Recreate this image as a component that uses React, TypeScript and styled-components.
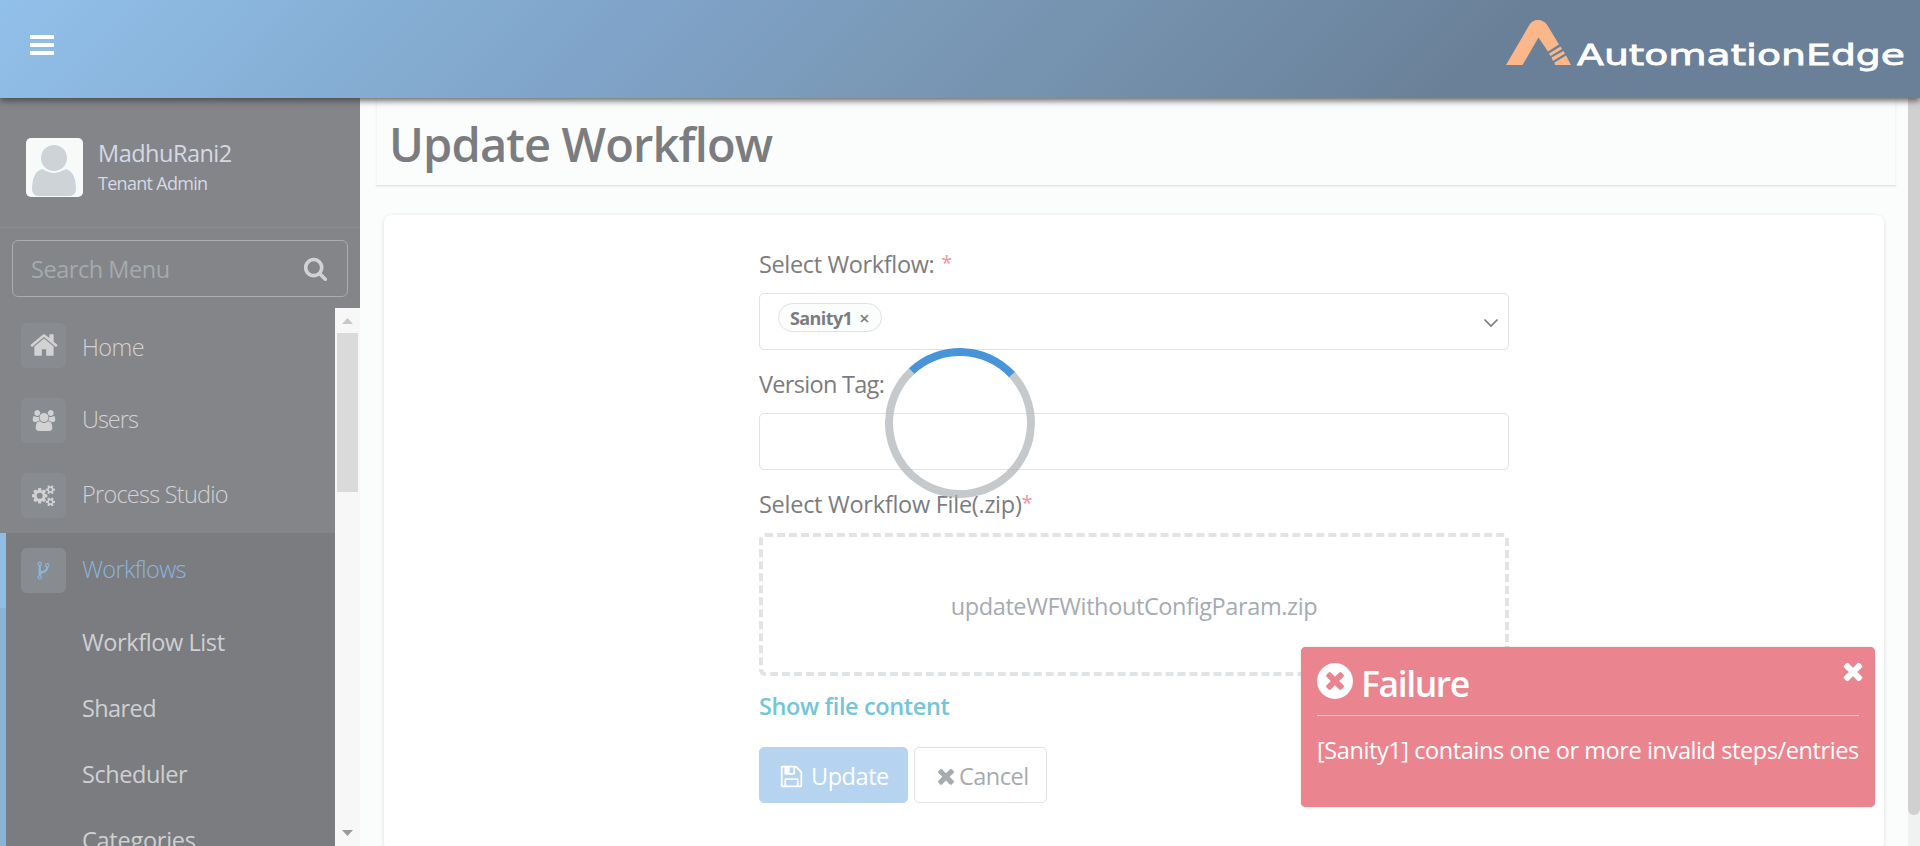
import React from 'react';
import styled, { createGlobalStyle } from 'styled-components';

const Global = createGlobalStyle`
  * { box-sizing: border-box; }
  html, body { margin: 0; height: 846px; overflow: hidden; background: #fbfdfc; }
  body { font-family: "Open Sans", "Noto Sans", sans-serif; font-size: 24px; color: #7b7c80; }
`;

const icons = {
  bars: { w: 1792, d: 'M1664 1344v128q0 26-19 45t-45 19h-1408q-26 0-45-19t-19-45v-128q0-26 19-45t45-19h1408q26 0 45 19t19 45zm0-512v128q0 26-19 45t-45 19h-1408q-26 0-45-19t-19-45v-128q0-26 19-45t45-19h1408q26 0 45 19t19 45zm0-512v128q0 26-19 45t-45 19h-1408q-26 0-45-19t-19-45v-128q0-26 19-45t45-19h1408q26 0 45 19t19 45z' },
  home: { w: 1792, d: 'M1472 992v480q0 26-19 45t-45 19h-384v-384h-256v384h-384q-26 0-45-19t-19-45v-480q0-1 .5-3t.5-3l575-474 575 474q1 2 1 6zm223-69l-62 74q-8 9-21 11h-3q-13 0-21-7l-692-577-692 577q-12 8-24 7-13-2-21-11l-62-74q-8-10-7-23.5t11-21.5l719-599q32-26 76-26t76 26l244 204v-195q0-14 9-23t23-9h192q14 0 23 9t9 23v408l219 182q10 8 11 21.5t-7 23.5z' },
  search: { w: 1792, d: 'M1216 832q0-185-131.5-316.5t-316.5-131.5-316.5 131.5-131.5 316.5 131.5 316.5 316.5 131.5 316.5-131.5 131.5-316.5zm512 832q0 52-38 90t-90 38q-54 0-90-38l-343-342q-179 124-399 124-143 0-273.5-55.5t-225-150-150-225-55.5-273.5 55.5-273.5 150-225 225-150 273.5-55.5 273.5 55.5 225 150 150 225 55.5 273.5q0 220-124 399l343 343q37 37 37 90z' },
  times: { w: 1792, d: 'M1490 1322q0 40-28 68l-136 136q-28 28-68 28t-68-28l-294-294-294 294q-28 28-68 28t-68-28l-136-136q-28-28-28-68t28-68l294-294-294-294q-28-28-28-68t28-68l136-136q28-28 68-28t68 28l294 294 294-294q28-28 68-28t68 28l136 136q28 28 28 68t-28 68l-294 294 294 294q28 28 28 68z' },
  timesCircle: { w: 1792, d: 'M1277 1122q0-26-19-45l-181-181 181-181q19-19 19-45 0-27-19-46l-90-90q-19-18-46-18-26 0-45 18l-181 181-181-181q-19-18-45-18-27 0-46 18l-90 90q-19 19-19 46 0 26 19 45l181 181-181 181q-19 19-19 45 0 27 19 46l90 90q19 18 46 18 26 0 45-18l181-181 181 181q19 18 45 18 27 0 46-18l90-90q19-19 19-46zm387-226q0 209-103 385.5t-279.5 279.5-385.5 103-385.5-103-279.5-279.5-103-385.5 103-385.5 279.5-279.5 385.5-103 385.5 103 279.5 279.5 103 385.5z' },
  save: { w: 1792, d: 'M512 1536h768v-384h-768v384zm896 0h128v-896q0-14-10-38.5t-20-34.5l-281-281q-10-10-34-20t-39-10v416q0 40-28 68t-68 28h-576q-40 0-68-28t-28-68v-416h-128v1280h128v-416q0-40 28-68t68-28h832q40 0 68 28t28 68v416zm-384-928v-320q0-13-9.5-22.5t-22.5-9.5h-192q-13 0-22.5 9.5t-9.5 22.5v320q0 13 9.5 22.5t22.5 9.5h192q13 0 22.5-9.5t9.5-22.5zm640 32v928q0 40-28 68t-68 28h-1344q-40 0-68-28t-28-68v-1344q0-40 28-68t68-28h928q40 0 88 20t76 48l280 280q28 28 48 76t20 88z' },
  fork: { w: 1792, d: 'M672 1472q0-40-28-68t-68-28-68 28-28 68 28 68 68 28 68-28 28-68zm0-1152q0-40-28-68t-68-28-68 28-28 68 28 68 68 28 68-28 28-68zm640 128q0-40-28-68t-68-28-68 28-28 68 28 68 68 28 68-28 28-68zm96 0q0 52-26 96.5t-70 69.5q-2 287-226 414-67 38-203 81-128 40-169.5 71t-41.5 100v26q44 25 70 69.5t26 96.5q0 80-56 136t-136 56-136-56-56-136q0-52 26-96.5t70-69.5v-820q-44-25-70-69.5t-26-96.5q0-80 56-136t136-56 136 56 56 136q0 52-26 96.5t-70 69.5v497q54-26 154-57 55-17 87.5-29.5t70.5-31 59-39.5 40.5-51 28-69.5 8.5-91.5q-44-25-70-69.5t-26-96.5q0-80 56-136t136-56 136 56 56 136z' },
  users: { w: 2048, d: 'M657 896q-162 5-265 128h-134q-82 0-138-40.5t-56-118.5q0-353 124-353 6 0 43.5 21t97.5 42.5 119 21.5q67 0 133-23-5 37-5 66 0 139 81 256zm1071 637q0 120-73 189.5t-194 69.5h-874q-121 0-194-69.5t-73-189.5q0-53 3.5-103.5t14-109 26.5-108.5 43-97.5 62-81 85.5-53.5 111.5-20q10 0 43 21.5t73 48 107 48 135 21.5 135-21.5 107-48 73-48 43-21.5q61 0 111.5 20t85.5 53.5 62 81 43 97.5 26.5 108.5 14 109 3.5 103.5zm-1024-1277q0 106-75 181t-181 75-181-75-75-181 75-181 181-75 181 75 75 181zm704 384q0 159-112.5 271.5t-271.5 112.5-271.5-112.5-112.5-271.5 112.5-271.5 271.5-112.5 271.5 112.5 112.5 271.5zm576 225q0 78-56 118.5t-138 40.5h-134q-103-123-265-128 81-117 81-256 0-29-5-66 66 23 133 23 59 0 119-21.5t97.5-42.5 43.5-21q124 0 124 353zm-128-609q0 106-75 181t-181 75-181-75-75-181 75-181 181-75 181 75 75 181z' },
  cogs: { w: 1920, d: 'M896 896q0-106-75-181t-181-75-181 75-75 181 75 181 181 75 181-75 75-181zm768 512q0-52-38-90t-90-38-90 38-38 90q0 53 37.5 90.5t90.5 37.5 90.5-37.5 37.5-90.5zm0-1024q0-52-38-90t-90-38-90 38-38 90q0 53 37.5 90.5t90.5 37.5 90.5-37.5 37.5-90.5zm-384 421v185q0 10-7 19.5t-16 10.5l-155 24q-11 35-32 76 34 48 90 115 7 11 7 20 0 12-7 19-23 30-82.5 89.5t-78.5 59.5q-11 0-21-7l-115-90q-37 19-77 31-11 108-23 155-7 24-30 24h-186q-11 0-20-7.5t-10-17.5l-23-153q-34-10-75-31l-118 89q-7 7-20 7-11 0-21-8-144-133-144-160 0-9 7-19 10-14 41-53t47-61q-23-44-35-82l-152-24q-10-1-17-9.5t-7-19.5v-185q0-10 7-19.5t16-10.5l155-24q11-35 32-76-34-48-90-115-7-11-7-20 0-12 7-20 22-30 82-89t79-59q11 0 21 7l115 90q34-18 77-32 11-108 23-154 7-24 30-24h186q11 0 20 7.5t10 17.5l23 153q34 10 75 31l118-89q8-7 20-7 11 0 21 8 144 133 144 160 0 8-7 19-12 16-42 54t-45 60q23 48 34 82l152 23q10 2 17 10.5t7 19.5zm640 533v140q0 16-149 31-12 27-30 52 51 113 51 138 0 4-4 7-122 71-124 71-8 0-46-47t-52-68q-20 2-30 2t-30-2q-14 21-52 68t-46 47q-2 0-124-71-4-3-4-7 0-25 51-138-18-25-30-52-149-15-149-31v-140q0-16 149-31 13-29 30-52-51-113-51-138 0-4 4-7 4-2 35-20t59-34 30-16q8 0 46 46.5t52 67.5q20-2 30-2t30 2q51-71 92-112l6-2q4 0 124 70 4 3 4 7 0 25-51 138 17 23 30 52 149 15 149 31zm0-1024v140q0 16-149 31-12 27-30 52 51 113 51 138 0 4-4 7-122 71-124 71-8 0-46-47t-52-68q-20 2-30 2t-30-2q-14 21-52 68t-46 47q-2 0-124-71-4-3-4-7 0-25 51-138-18-25-30-52-149-15-149-31v-140q0-16 149-31 13-29 30-52-51-113-51-138 0-4 4-7 4-2 35-20t59-34 30-16q8 0 46 46.5t52 67.5q20-2 30-2t30 2q51-71 92-112l6-2q4 0 124 70 4 3 4 7 0 25-51 138 17 23 30 52 149 15 149 31z' },
};

type IconName = keyof typeof icons;

const Svg = styled.svg`
  display: block;
  flex: none;
  fill: currentColor;
`;

/* Icon glyphs share a 1792-unit em; size is the em height in pixels. */
const Icon = ({ name, size }: { name: IconName; size: number }) => (
  <Svg width={(size * icons[name].w) / 1792} height={size} viewBox={`0 0 ${icons[name].w} 1792`}>
    <path d={icons[name].d} />
  </Svg>
);

interface TextProps {
  $size?: number;
  $weight?: number;
  $track?: number;
  $line?: number;
  $color?: string;
}
const Text = styled.span<TextProps>`
  display: block;
  margin: 0;
  white-space: nowrap;
  font-size: ${(p) => p.$size ?? 23.5}px;
  font-weight: ${(p) => p.$weight ?? 400};
  letter-spacing: ${(p) => p.$track ?? 0}px;
  line-height: ${(p) => p.$line ?? 36}px;
  color: ${(p) => p.$color ?? 'inherit'};
`;

const Page = styled.div`
  display: flex;
  flex-direction: column;
  width: 1920px;
  height: 846px;
  overflow: hidden;
`;

const Header = styled.header`
  flex: none;
  position: relative;
  z-index: 2;
  display: flex;
  justify-content: space-between;
  align-items: flex-start;
  height: 98px;
  padding: 31px 15px 0 27.5px;
  color: #fff;
  background: linear-gradient(135deg, #91c0ea 0%, #86afd5 19%, #7fa2c7 34%, #7a9ab8 46%, #6f88a2 68%, #6a8098 76%);
  box-shadow: 0 3px 6px rgba(60, 60, 60, 0.75);
`;

const Brand = styled.svg`
  display: block;
  margin-top: -16px;
`;

const Body = styled.div`
  flex: 1;
  display: flex;
  min-height: 0;
`;

const Sidebar = styled.aside`
  flex: none;
  display: flex;
  flex-direction: column;
  width: 360px;
  background: #838589;
`;

const Profile = styled.div`
  flex: none;
  display: flex;
  gap: 15px;
  height: 130px;
  padding: 40px 26px 0;
  border-bottom: 1px solid #8c8f93;
`;

const Avatar = styled.svg`
  display: block;
  border-radius: 5px;
  background: #f8f9f9;
`;

const ProfileText = styled.div`
  margin-top: -1px;
`;

const SearchBox = styled.div`
  flex: none;
  display: flex;
  align-items: center;
  justify-content: space-between;
  height: 57px;
  margin: 12px 12px 11px;
  padding: 0 19px 0 18px;
  border: 1px solid #a9adb0;
  border-radius: 6px;
  color: #d2d2d3;
`;

const MenuArea = styled.div`
  flex: 1;
  display: flex;
  min-height: 0;
`;

const Menu = styled.nav`
  flex: 1;
  overflow: hidden;
`;

const MenuRow = styled.div<{ $active?: boolean }>`
  display: flex;
  align-items: flex-start;
  gap: 16px;
  height: 75px;
  padding: 15px 0 0 ${(p) => (p.$active ? 15 : 21)}px;
  border-left: ${(p) => (p.$active ? '6px solid #8fbde6' : '0')};
  color: ${(p) => (p.$active ? '#8ab5dd' : '#d2d2d3')};
  background: ${(p) => (p.$active ? '#7b7c80' : 'transparent')};
`;

const IconTile = styled.span<{ $lift?: number }>`
  flex: none;
  display: flex;
  align-items: center;
  justify-content: center;
  width: 45px;
  height: 45px;
  padding-bottom: ${(p) => p.$lift ?? 0}px;
  border-radius: 6px;
  background: #888b8f;
`;

const MenuLabel = styled(Text)<{ $drop?: number }>`
  padding-top: ${(p) => p.$drop ?? 3}px;
`;

const SubMenu = styled.div`
  height: 300px;
  padding: 1px 0 0 76px;
  border-left: 6px solid #8ab3da;
  background: #7b7c80;
  color: #cfd0d1;
`;

const MenuScroll = styled.div`
  flex: none;
  display: flex;
  flex-direction: column;
  align-items: center;
  width: 25px;
  background: #f7f7f7;
`;

const ScrollThumb = styled.div`
  width: 21px;
  height: 159px;
  background: #dadada;
`;

const ScrollArrow = styled.svg`
  display: block;
  flex: none;
`;

const Spacer = styled.div`
  flex: 1;
`;

const Main = styled.main`
  flex: 1;
  padding: 0 12px 0 16px;
  background: #fbfdfc;
`;

const TitleBar = styled.div`
  height: 88px;
  padding-left: 12px;
  background: #fbfdfc;
  border: 1px solid #f4f5f5;
  border-top: 0;
  border-bottom-color: #e2e3e3;
  box-shadow: 0 1px 2px rgba(0, 0, 0, 0.06);
`;

const Card = styled.section`
  display: flex;
  flex-direction: column;
  width: 1500px;
  height: 636px;
  margin: 29px 0 0 8px;
  padding: 31px 0 0 375px;
  border-radius: 8px;
  background: #fff;
  box-shadow: 0 1px 4px rgba(0, 0, 0, 0.13);
`;

const Label = styled.div<{ $gap?: number }>`
  display: flex;
  gap: ${(p) => p.$gap ?? 0}px;
  height: 36px;
  margin-bottom: 11px;
`;

const Star = styled(Text)`
  color: #ee959c;
`;

const Field = styled.div`
  display: flex;
  align-items: flex-start;
  justify-content: space-between;
  width: 750px;
  height: 57px;
  margin-bottom: 16px;
  padding: 9px 9px 0 18px;
  border: 1px solid #dfe1e2;
  border-radius: 5px;
`;

const Chip = styled.span`
  display: flex;
  align-items: center;
  gap: 7px;
  width: 104px;
  height: 29px;
  padding: 2px 0 0 11px;
  border: 1px solid #dfe1e2;
  border-radius: 15px;
  background: #fbfdfc;
`;

const Chevron = styled.svg`
  display: block;
  margin-top: 15px;
`;

const DropZone = styled.div`
  display: flex;
  justify-content: center;
  width: 750px;
  height: 143px;
  margin-bottom: 12px;
  padding-top: 51px;
  border: 4px dashed #e1e4e7;
  border-radius: 6px;
  color: #a5abb0;
`;

const Actions = styled.div`
  display: flex;
  gap: 6px;
  margin-top: 23px;
`;

const Button = styled.button<{ $primary?: boolean }>`
  display: flex;
  align-items: center;
  gap: ${(p) => (p.$primary ? 7 : 1)}px;
  width: ${(p) => (p.$primary ? 149 : 133)}px;
  height: 56px;
  padding: 2px 0 0 19px;
  font: inherit;
  border: 1px solid ${(p) => (p.$primary ? '#b6d3f0' : '#dfe1e2')};
  border-radius: 5px;
  color: ${(p) => (p.$primary ? '#fff' : '#a5abb0')};
  background: ${(p) => (p.$primary ? '#b6d3f0' : '#fff')};
`;

const PageScroll = styled.div`
  flex: none;
  width: 12px;
  background: #f0f2f2;
`;

const PageThumb = styled.div`
  height: 717px;
  border-radius: 0 0 6px 6px;
  background: #d0d0d0;
`;

const Spinner = styled.div`
  position: absolute;
  left: 885px;
  top: 348px;
  width: 150px;
  height: 150px;
  border: 8px solid rgba(170, 176, 180, 0.68);
  border-top-color: #4794d8;
  border-radius: 50%;
  transform: rotate(2deg);
`;

const Toast = styled.div`
  position: absolute;
  left: 1301px;
  top: 647px;
  z-index: 3;
  width: 574px;
  height: 160px;
  padding: 13px 16px 0;
  border-radius: 5px;
  color: #fff;
  background: #ea858f;
  box-shadow: 0 0 1px rgba(90, 90, 90, 0.8);
`;

const ToastHead = styled.div`
  display: flex;
  gap: 7px;
  height: 56px;
  margin-bottom: 4px;
  border-bottom: 1px solid #f9cfd3;
`;

const ToastIcon = styled.span`
  margin: 0 -2px 0 -3px;
`;

const CloseIcon = styled.span`
  margin: -3px -8px 0 auto;
`;

const menuItems: { icon: IconName; label: string; size: number; track: number; lift?: number; drop?: number; active?: boolean }[] = [
  { icon: 'home', label: 'Home', size: 30, lift: 2, drop: 6, track: -0.6 },
  { icon: 'users', label: 'Users', size: 21, track: -1 },
  { icon: 'cogs', label: 'Process Studio', size: 21.5, track: -0.75 },
  { icon: 'fork', label: 'Workflows', size: 21, track: -0.6, active: true },
];

const subItems = [
  { label: 'Workflow List', track: -0.4 },
  { label: 'Shared', track: -0.6 },
  { label: 'Scheduler', track: -0.45 },
  { label: 'Categories', track: -0.25 },
];

export default function App() {
  return (
    <Page>
      <Global />
      <Header>
        <Icon name="bars" size={28} />
        <Brand width="402" height="62" viewBox="1503 15 402 62">
          <path
            fill="#fbb78a"
            d="M1506 65 L1529 25.5 Q1532 20 1538 20 Q1544 20 1547.5 25.5 L1559 44.5 L1548 51.5 L1538.5 37.5 L1522.5 65 Z M1549 53.5 L1560.5 46.5 L1562 49 L1550.5 56 Z M1551.5 57.5 L1563.5 51 L1565 53.5 L1553 61 Z M1554.5 62.5 L1566 55.5 L1571 65 L1555 65 Z"
          />
          <text x="1577" y="64.5" fontFamily="DejaVu Sans" fontSize="28" fill="#fff" stroke="#fff" strokeWidth="0.8" textLength="328" lengthAdjust="spacingAndGlyphs">
            AutomationEdge
          </text>
        </Brand>
      </Header>
      <Body>
        <Sidebar>
          <Profile>
            <Avatar width="57" height="59" viewBox="0 0 57 59">
              <path fill="#cdd3d7" d="M16 31 Q28 38 40 31 Q50 34 50 52 Q49 58 43 58 H13 Q7 58 6 52 Q6 34 16 31 Z" />
              <circle cx="28" cy="20" r="14" fill="#cdd3d7" stroke="#f8f9f9" strokeWidth="2" />
            </Avatar>
            <ProfileText>
              <Text $line={32} $track={-0.5} $color="#d5d9e4">MadhuRani2</Text>
              <Text $size={18} $line={29} $track={-0.7} $color="#d5d9e4">Tenant Admin</Text>
            </ProfileText>
          </Profile>
          <SearchBox>
            <Text $track={-0.45} $color="#a5aaae">Search Menu</Text>
            <Icon name="search" size={25} />
          </SearchBox>
          <MenuArea>
            <Menu>
              {menuItems.map((m) => (
                <MenuRow key={m.label} $active={m.active}>
                  <IconTile $lift={m.lift}>
                    <Icon name={m.icon} size={m.size} />
                  </IconTile>
                  <MenuLabel $weight={300} $drop={m.drop} $track={m.track}>{m.label}</MenuLabel>
                </MenuRow>
              ))}
              <SubMenu>
                {subItems.map((s) => (
                  <Text key={s.label} $line={66} $track={s.track}>{s.label}</Text>
                ))}
              </SubMenu>
            </Menu>
            <MenuScroll>
              <ScrollArrow width="25" height="25">
                <path d="M7 16 L12.5 10 L18 16 Z" fill="#c8c8c8" />
              </ScrollArrow>
              <ScrollThumb />
              <Spacer />
              <ScrollArrow width="25" height="25">
                <path d="M7 9 L12.5 15 L18 9 Z" fill="#999" />
              </ScrollArrow>
            </MenuScroll>
          </MenuArea>
        </Sidebar>
        <Main>
          <TitleBar>
            <Text as="h1" $size={47} $weight={600} $line={92} $track={-0.85}>Update Workflow</Text>
          </TitleBar>
          <Card>
            <Label $gap={7}><Text $track={-0.36}>Select Workflow:</Text><Star $size={20} $line={33}>*</Star></Label>
            <Field>
              <Chip>
                <Text $size={18} $weight={700} $line={27} $track={-0.6}>Sanity1</Text>
                <Text $size={18} $weight={600} $line={27}>×</Text>
              </Chip>
              <Chevron width="16" height="10">
                <path d="M1.5 1.5 L8 8 L14.5 1.5" fill="none" stroke="#7b7c80" strokeWidth="1.7" />
              </Chevron>
            </Field>
            <Label><Text $track={-0.7}>Version Tag:</Text></Label>
            <Field />
            <Label><Text $track={-0.27}>Select Workflow File(.zip)</Text><Star $size={20} $line={33}>*</Star></Label>
            <DropZone><Text $track={-0.38}>updateWFWithoutConfigParam.zip</Text></DropZone>
            <Text $weight={600} $track={-0.37} $color="#74c5d6">Show file content</Text>
            <Actions>
              <Button $primary><Icon name="save" size={25} /><Text $track={-0.45}>Update</Text></Button>
              <Button><Icon name="times" size={24} /><Text $track={-0.5}>Cancel</Text></Button>
            </Actions>
          </Card>
        </Main>
        <PageScroll><PageThumb /></PageScroll>
      </Body>
      <Spinner />
      <Toast>
        <ToastHead>
          <ToastIcon><Icon name="timesCircle" size={42} /></ToastIcon>
          <Text $size={35.5} $weight={600} $line={47} $track={-1.4}>Failure</Text>
          <CloseIcon><Icon name="times" size={28} /></CloseIcon>
        </ToastHead>
        <Text $line={60} $track={-0.41}>[Sanity1] contains one or more invalid steps/entries</Text>
      </Toast>
    </Page>
  );
}
